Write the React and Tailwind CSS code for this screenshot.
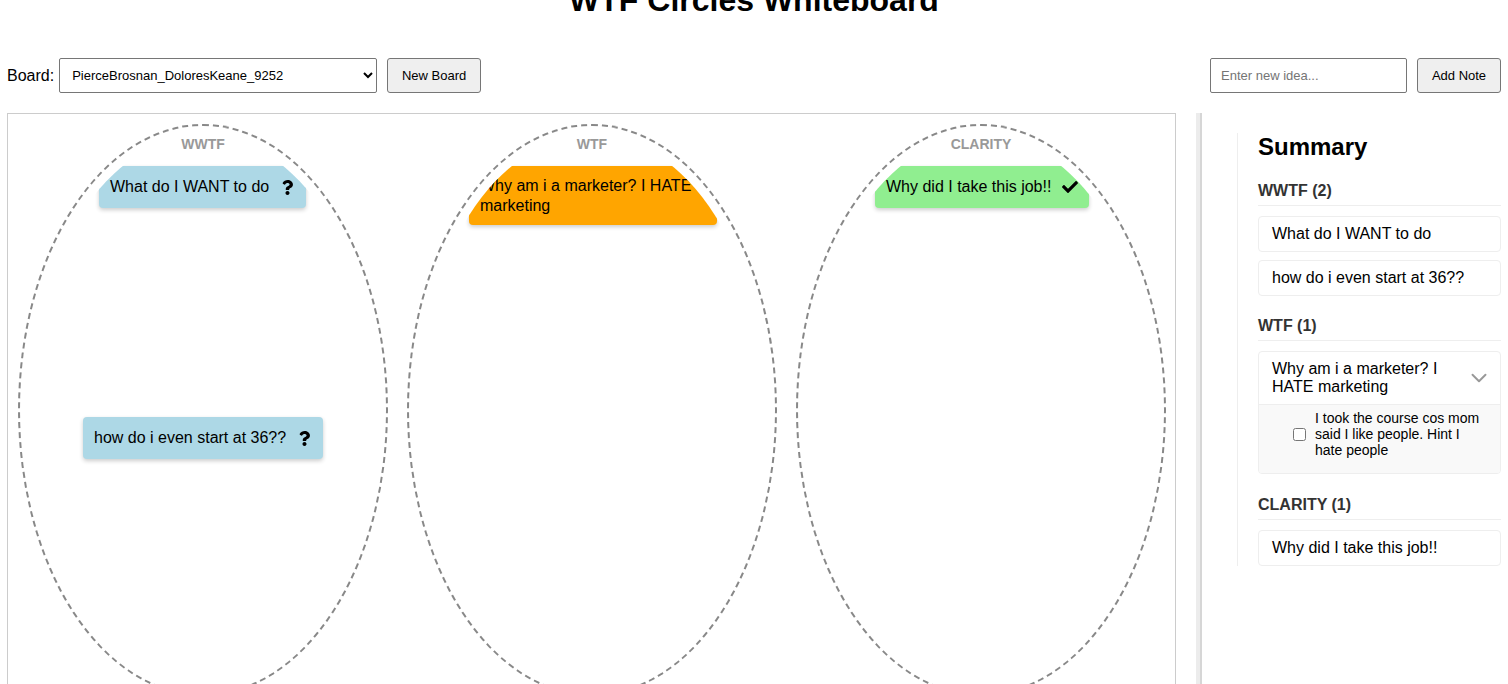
import React, { useState } from 'react';
import { FaQuestion, FaCheck } from 'react-icons/fa';
import { ChevronDown } from 'lucide-react';

const circles = [
  { id: 'wwtf', label: 'WWTF' },
  { id: 'wtf', label: 'WTF' },
  { id: 'clarity', label: 'CLARITY' },
];

const notes = [
  { id: 1, circle: 'wwtf', text: 'What do I WANT to do', color: 'bg-[#add8e6]', pos: 'left-[70px] top-[31px]', icon: 'q' },
  { id: 2, circle: 'wwtf', text: 'how do i even start at 36??', color: 'bg-[#add8e6]', pos: 'left-[54px] top-[282px]', icon: 'q' },
  { id: 3, circle: 'wtf', text: 'Why am i a marketer? I HATE marketing', color: 'bg-[#ffa500]', pos: 'left-[51px] top-[31px]', wide: true },
  { id: 4, circle: 'clarity', text: 'Why did I take this job!!', color: 'bg-[#90ee90]', pos: 'left-[68px] top-[31px]', icon: 'check' },
];

const Note = ({ note }) => (
  <div
    className={`absolute ${note.pos} ${note.color} flex items-center gap-[11px] rounded-[4px] px-[11px] py-[10px] shadow-[0_2px_4px_rgba(0,0,0,0.2)] text-[16px] text-black`}
  >
    <span className={note.wide ? 'w-[226px] leading-[19.5px]' : 'whitespace-nowrap leading-[22px]'}>{note.text}</span>
    {note.icon === 'q' && <FaQuestion size={15} className="shrink-0" />}
    {note.icon === 'check' && <FaCheck size={16} className="shrink-0" />}
  </div>
);

const Circle = ({ circle }) => (
  <div className="relative w-[370px] h-[572px] shrink-0 rounded-[50%] border-2 border-dashed border-[#888]">
    <div className="absolute inset-[9px] rounded-[50%] overflow-hidden">
      {notes.filter((n) => n.circle === circle.id).map((n) => (
        <Note key={n.id} note={n} />
      ))}
    </div>
    <div className="absolute top-[8px] left-0 right-0 text-center text-[14px] font-bold text-[#999]">{circle.label}</div>
  </div>
);

const SummaryItem = ({ children }) => (
  <div className="rounded-[4px] border border-[#eee] bg-white px-[13px] py-[8px] text-[16px] leading-[18px] text-black">{children}</div>
);

const Section = ({ title, last, children }) => (
  <div className={last ? '' : 'mb-[20px]'}>
    <h3 className="border-b border-[#eee] pb-[5px] mb-[10px] text-[16px] font-bold leading-[19px] text-[#333]">{title}</h3>
    <div className="flex flex-col gap-[8px]">{children}</div>
  </div>
);

export default function App() {
  const [board, setBoard] = useState('PierceBrosnan_DoloresKeane_9252');
  const [idea, setIdea] = useState('');
  const [done, setDone] = useState(false);

  return (
    <div className="h-[684px] overflow-hidden bg-white px-[7px] text-black font-['Liberation_Sans',Arial,sans-serif]">
      <h1 className="mt-[-18px] text-center text-[32px] font-bold leading-[37px]">WTF Circles Whiteboard</h1>

      <div className="mt-[39px] flex h-[35px] items-center justify-between">
        <div className="flex items-center">
          <label className="text-[16px]">Board:</label>
          <select
            value={board}
            onChange={(e) => setBoard(e.target.value)}
            className="ml-[5px] h-[35px] w-[318px] rounded-[2px] border border-[#767676] bg-white pl-[8px] pr-[6px] text-[13px]"
          >
            <option>PierceBrosnan_DoloresKeane_9252</option>
          </select>
          <button className="ml-[10px] h-[35px] w-[94px] rounded-[3px] border border-[#767676] bg-[#efefef] text-[13px]">New Board</button>
        </div>
        <div className="flex items-center">
          <input
            value={idea}
            onChange={(e) => setIdea(e.target.value)}
            placeholder="Enter new idea..."
            className="h-[35px] w-[197px] rounded-[2px] border border-[#767676] px-[10px] text-[13px] placeholder:text-[#757575] outline-none"
          />
          <button className="ml-[10px] h-[35px] w-[84px] rounded-[3px] border border-[#767676] bg-[#efefef] text-[13px]">Add Note</button>
        </div>
      </div>

      <div className="mt-[20px] flex items-start">
        <div className="flex w-[1169px] shrink-0 gap-[19px] border border-[#ccc] px-[10px] pt-[10px] pb-[20px]">
          {circles.map((c) => (
            <Circle key={c.id} circle={c} />
          ))}
        </div>

        <div className="ml-[20px] w-[6px] self-stretch border-r-2 border-[#d6d6d6] bg-[#ececec]" />

        <div className="ml-[35px] mt-[20px] w-[264px] border-l border-[#eee] pl-[20px]">
          <h2 className="mb-[20px] text-[24px] font-bold leading-[28px]">Summary</h2>

          <Section title="WWTF (2)">
            <SummaryItem>What do I WANT to do</SummaryItem>
            <SummaryItem>how do i even start at 36??</SummaryItem>
          </Section>

          <Section title="WTF (1)">
            <div className="mb-[1px] overflow-hidden rounded-[4px] border border-[#eee] bg-white">
              <div className="flex items-center justify-between px-[13px] py-[8px]">
                <span className="w-[180px] text-[16px] leading-[18px]">Why am i a marketer? I HATE marketing</span>
                <ChevronDown size={26} strokeWidth={1.8} className="mr-[-5px] text-[#999]" />
              </div>
              <div className="flex items-center border-t border-[#eee] bg-[#f9f9f9] pt-[5px] pb-[15px] pl-[34px] pr-[10px]">
                <input type="checkbox" checked={done} onChange={() => setDone(!done)} className="h-[13px] w-[13px] shrink-0" />
                <span className="ml-[9px] text-[14px] leading-[16px]">I took the course cos mom said I like people. Hint I hate people</span>
              </div>
            </div>
          </Section>

          <Section title="CLARITY (1)" last>
            <SummaryItem>Why did I take this job!!</SummaryItem>
          </Section>
        </div>
      </div>
    </div>
  );
}
